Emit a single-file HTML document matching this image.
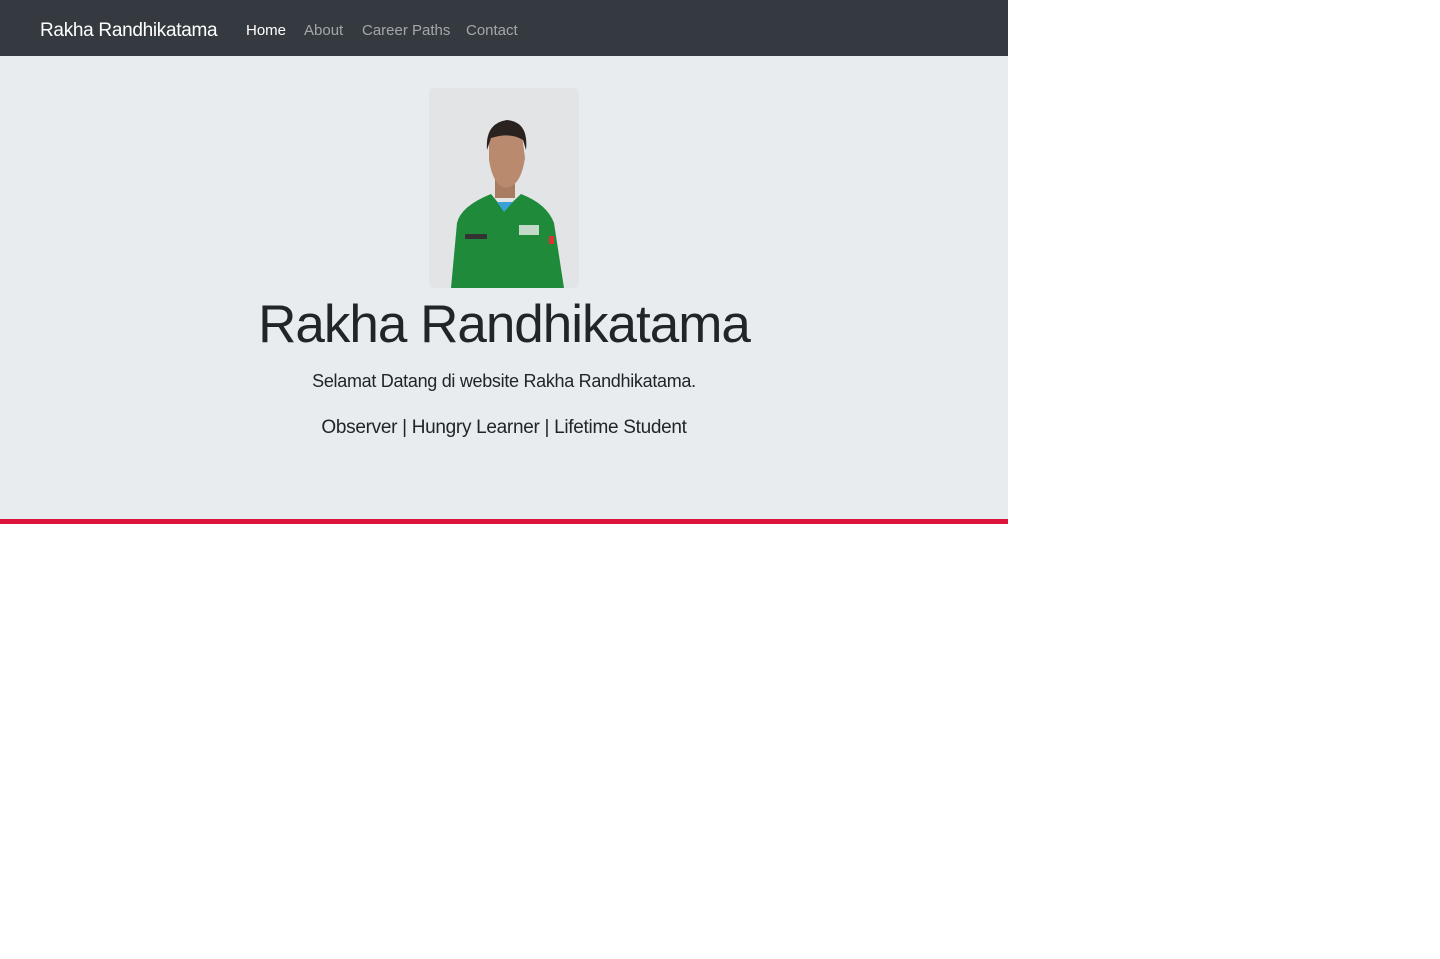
<!DOCTYPE html>
<html><head><meta charset="utf-8"><style>
*{margin:0;padding:0;box-sizing:border-box}
body{width:1440px;height:959px;background:#fff;font-family:"Liberation Sans",sans-serif;position:relative;overflow:hidden}
.nav{position:absolute;left:0;top:0;width:1008px;height:56px;background:#343a40}
.brand{position:absolute;left:40px;top:20px;color:#fff;font-size:19px;letter-spacing:-0.3px}
.nl{position:absolute;top:22px;font-size:15px;color:rgba(255,255,255,.55)}
.jumbo{position:absolute;left:0;top:56px;width:1008px;height:463px;background:#e9ecef}
.red{position:absolute;left:0;top:519px;width:1008px;height:5px;background:#dc143c}
.photo{position:absolute;left:429px;top:88px;width:150px;height:200px;border-radius:4px;overflow:hidden;background:#e4e6e8}
h1{position:absolute;left:0;width:1008px;text-align:center;top:294px;font-weight:normal;font-size:53px;color:#212529;letter-spacing:-1px}
.p1{position:absolute;left:0;width:1008px;text-align:center;top:371px;font-size:18px;color:#212529;letter-spacing:-0.3px}
.p2{position:absolute;left:0;width:1008px;text-align:center;top:417px;font-size:19px;color:#212529;letter-spacing:-0.3px}
</style></head><body>
<div class="nav">
<div class="brand">Rakha Randhikatama</div>
<div class="nl" style="left:246px;color:#fff">Home</div>
<div class="nl" style="left:304px">About</div>
<div class="nl" style="left:362px">Career Paths</div>
<div class="nl" style="left:466px">Contact</div>
</div>
<div class="jumbo"></div>
<div class="red"></div>
<div class="photo">
<svg width="150" height="200" viewBox="0 0 150 200">
<rect width="150" height="200" fill="#e2e4e6"/>
<rect x="66" y="85" width="20" height="25" fill="#a97c62"/>
<path d="M60 55 Q60 38 76 36 Q93 38 94 55 L96 70 Q92 98 77 100 Q64 98 60 72Z" fill="#b98a6e"/>
<path d="M58 62 Q56 35 78 32 Q100 34 97 62 L94 52 Q82 44 62 50Z" fill="#2a221e"/>
<path d="M22 200 L28 135 Q32 118 62 106 L75 122 L92 106 Q118 116 125 135 L135 200Z" fill="#1f8a3a"/>
<path d="M68 114 L75 124 L84 114Z" fill="#3aa0d8"/>
<rect x="36" y="146" width="22" height="5" fill="#333"/>
<rect x="90" y="137" width="20" height="10" fill="#eee" opacity=".8"/>
<rect x="120" y="148" width="5" height="8" fill="#d33"/>
</svg>
</div>
<h1>Rakha Randhikatama</h1>
<div class="p1">Selamat Datang di website Rakha Randhikatama.</div>
<div class="p2">Observer | Hungry Learner | Lifetime Student</div>
</body></html>
